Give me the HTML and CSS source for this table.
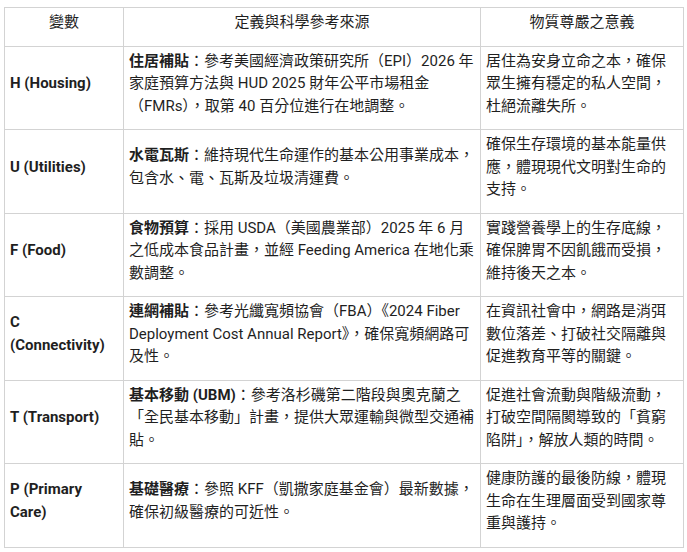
FILE: index.html
```html
<!DOCTYPE html>
<html lang="zh-Hant">
<head>
<meta charset="utf-8">
<title>變數定義</title>
<link rel="stylesheet" href="styles.css">
</head>
<body>
<div class="wrap">
<table class="grid">
<colgroup><col class="c1"><col class="c2"><col class="c3"></colgroup>
<thead>
<tr><th>變數</th><th>定義與科學參考來源</th><th>物質尊嚴之意義</th></tr>
</thead>
<tbody>
<tr>
<td class="var">H (Housing)</td>
<td><b>住居補貼</b>：參考美國經濟政策研究所（EPI）2026 年家庭預算方法與 HUD 2025 財年公平市場租金（FMRs），取第 40 百分位進行在地調整。</td>
<td>居住為安身立命之本，確保眾生擁有穩定的私人空間，杜絕流離失所。</td>
</tr>
<tr>
<td class="var">U (Utilities)</td>
<td><b>水電瓦斯</b>：維持現代生命運作的基本公用事業成本，包含水、電、瓦斯及垃圾清運費。</td>
<td>確保生存環境的基本能量供應，體現現代文明對生命的支持。</td>
</tr>
<tr>
<td class="var">F (Food)</td>
<td><b>食物預算</b>：採用 USDA（美國農業部）2025 年 6 月之低成本食品計畫，並經 Feeding America 在地化乘數調整。</td>
<td>實踐營養學上的生存底線，確保脾胃不因飢餓而受損，維持後天之本。</td>
</tr>
<tr>
<td class="var">C (Connectivity)</td>
<td><b>連網補貼</b>：參考光纖寬頻協會（FBA）《2024 Fiber Deployment Cost Annual Report》，確保寬頻網路可及性。</td>
<td>在資訊社會中，網路是消弭數位落差、打破社交隔離與促進教育平等的關鍵。</td>
</tr>
<tr>
<td class="var">T (Transport)</td>
<td><b>基本移動 (UBM)</b>：參考洛杉磯第二階段與奧克蘭之「全民基本移動」計畫，提供大眾運輸與微型交通補貼。</td>
<td>促進社會流動與階級流動，打破空間隔閡導致的「貧窮陷阱」，解放人類的時間。</td>
</tr>
<tr>
<td class="var">P (Primary Care)</td>
<td><b>基礎醫療</b>：參照 KFF（凱撒家庭基金會）最新數據，確保初級醫療的可近性。</td>
<td>健康防護的最後防線，體現生命在生理層面受到國家尊重與護持。</td>
</tr>
</tbody>
</table>
</div>
</body>
</html>
```
FILE: styles.css
```css
html, body {
  margin: 0;
  background: #ffffff;
}
body {
  font-family: Roboto, "Noto Sans CJK TC", sans-serif;
  font-size: 15px;
  line-height: 22.5px;
  color: #1f1f1f;
}
.wrap {
  padding: 7px 4px 0 4px;
}
.grid {
  border-collapse: collapse;
  table-layout: fixed;
  width: 679px;
}
.c1 { width: 119px; }
.c2 { width: 357px; }
.c3 { width: 203px; }
.grid th,
.grid td {
  border: 1px solid #d3d3d3;
  padding: 3px 5px 12px 5px;
  vertical-align: middle;
  text-align: left;
}
.grid th {
  font-weight: 400;
  text-align: center;
}
.grid b {
  font-weight: 700;
}
.var {
  font-weight: 700;
}
```
